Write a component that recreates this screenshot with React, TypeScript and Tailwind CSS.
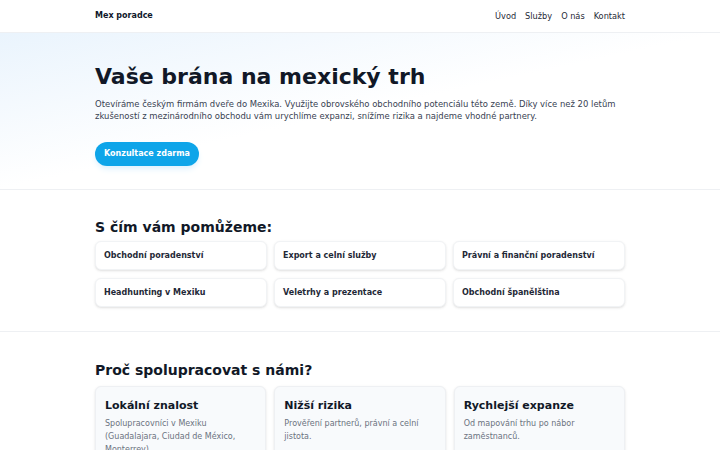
export default function App() {
  const services = [
    "Obchodní poradenství",
    "Export a celní služby",
    "Právní a finanční poradenství",
    "Headhunting v Mexiku",
    "Veletrhy a prezentace",
    "Obchodní španělština",
  ];
  const reasons = [
    { t: "Lokální znalost", d: "Spolupracovníci v Mexiku (Guadalajara, Ciudad de México, Monterrey)." },
    { t: "Nižší rizika", d: "Prověření partnerů, právní a celní jistota." },
    { t: "Rychlejší expanze", d: "Od mapování trhu po nábor zaměstnanců." },
  ];
  return (
    <div className="min-h-screen bg-white text-[#0f172a]" style={{ fontFamily: '"DejaVu Sans", sans-serif' }}>
      <header className="border-b border-[#eef0f3] bg-white">
        <div className="w-[530px] mx-auto h-8 flex items-center justify-between">
          <div className="text-[8px] font-bold">Mex poradce</div>
          <nav className="flex gap-[9px] text-[8.2px] text-[#1f2937]">
            <a>Úvod</a>
            <a>Služby</a>
            <a>O nás</a>
            <a>Kontakt</a>
          </nav>
        </div>
      </header>

      <section className="bg-gradient-to-br from-[#eaf4fd] via-white to-white border-b border-[#eef0f3]">
        <div className="w-[530px] mx-auto pt-[29px] pb-[23px]">
          <h1 className="text-[22px] font-bold leading-[30px] text-[#111827]">Vaše brána na mexický trh</h1>
          <p className="mt-[6px] text-[8.45px] leading-[12px] text-[#374151]">
            Otevíráme českým firmám dveře do Mexika. Využijte obrovského obchodního potenciálu této země. Díky více než 20 letům zkušeností z mezinárodního obchodu vám urychlíme expanzi, snížíme rizika a najdeme vhodné partnery.
          </p>
          <button className="mt-[20px] h-6 px-[9px] rounded-full bg-[#0ea5e9] text-white text-[8px] font-bold shadow-md shadow-sky-100">
            Konzultace zdarma
          </button>
        </div>
      </section>

      <section className="border-b border-[#eef0f3]">
        <div className="w-[530px] mx-auto pt-[27px] pb-[24px]">
          <h2 className="text-[14px] font-bold leading-[20px] text-[#111827]">S čím vám pomůžeme:</h2>
          <div className="mt-[4px] grid grid-cols-3 gap-x-[7px] gap-y-[8px]">
            {services.map((s) => (
              <div key={s} className="h-[29px] flex items-center px-[8px] rounded-md bg-white border border-[#f1f3f5] shadow-sm text-[8px] font-bold text-[#1f2937]">
                {s}
              </div>
            ))}
          </div>
        </div>
      </section>

      <section>
        <div className="w-[530px] mx-auto pt-[28px]">
          <h2 className="text-[14px] font-bold leading-[20px] text-[#111827]">Proč spolupracovat s námi?</h2>
          <div className="mt-[6px] grid grid-cols-3 gap-[8px]">
            {reasons.map((r) => (
              <div key={r.t} className="rounded-md bg-[#f8fafc] border border-[#eef0f3] shadow-sm px-[9px] pt-[10px] pb-3">
                <div className="text-[11px] font-bold leading-[18px] text-[#111827]">{r.t}</div>
                <p className="mt-[2px] text-[8px] leading-[13px] text-[#6b7280]">{r.d}</p>
              </div>
            ))}
          </div>
        </div>
      </section>
    </div>
  );
}
